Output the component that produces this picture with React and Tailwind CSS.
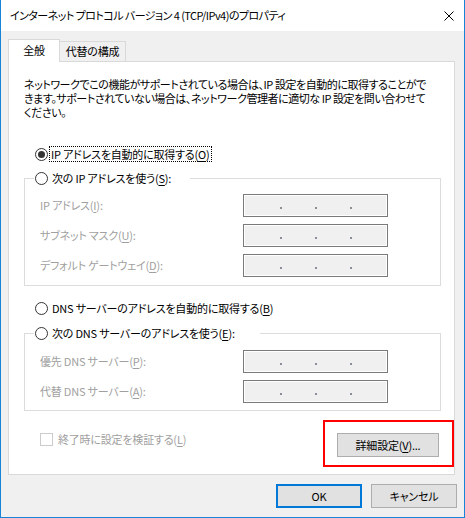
import React from 'react';

const Key = ({ k }) => <span className="underline underline-offset-2">{k}</span>;

function Radio({ checked }) {
  return (
    <span className="w-[13px] h-[13px] shrink-0 rounded-full border border-[#333333] bg-white flex items-center justify-center">
      {checked && <span className="w-[7px] h-[7px] rounded-full bg-[#333333]" />}
    </span>
  );
}

function IpBox() {
  return (
    <div className="w-[145px] h-[23px] border border-[#7a7a7a] bg-[#f0f0f0] shadow-[inset_0_0_0_1px_#ffffff] flex items-start pl-[36px] pt-[12px] gap-[33px]">
      <span className="w-[2px] h-[2px] bg-[#8a8e96]" />
      <span className="w-[2px] h-[2px] bg-[#8a8e96]" />
      <span className="w-[2px] h-[2px] bg-[#8a8e96]" />
    </div>
  );
}

function FieldRow({ label, k, rest }) {
  return (
    <div className="flex items-center h-[23px] ml-[6px]">
      <span className="w-[203px] text-[#a0a0a0]">
        {label}(<Key k={k} />){rest}
      </span>
      <IpBox />
    </div>
  );
}

function Group({ legendWidth, legend, children, top, bottom }) {
  return (
    <fieldset className={`w-[417px] border border-[#dcdcdc] pl-[9px] ${bottom}`}>
      <legend className={`${legendWidth} h-[18px] pl-[1px] flex items-center gap-[4px]`}>
        <Radio />
        <span>{legend}</span>
      </legend>
      <div className={`flex flex-col gap-[7px] ${top}`}>{children}</div>
    </fieldset>
  );
}

export default function App() {
  return (
    <div className="w-[465px] h-[518px] bg-[#f0f0f0] border-l border-r border-b border-[#1883d7] flex flex-col text-[11px] tracking-[-0.2px] leading-none text-black font-['Noto_Sans_CJK_JP',sans-serif] [font-feature-settings:'palt']">
      {/* Title bar */}
      <div className="h-[31px] shrink-0 bg-white flex items-center pl-[9px] pr-[9px] justify-between">
        <span className="tracking-[-0.55px]">インターネット プロトコル バージョン 4 (TCP/IPv4)のプロパティ</span>
        <svg width="10" height="10" viewBox="0 0 10 10" className="mr-[1px]">
          <path d="M0.5 0.5 L9.5 9.5 M9.5 0.5 L0.5 9.5" stroke="#000" strokeWidth="1" />
        </svg>
      </div>

      {/* Body */}
      <div className="pt-[8px] pl-[7px] flex flex-col">
        {/* Tabs */}
        <div className="flex items-start h-[22px]">
          <div className="relative z-10 w-[52px] h-[23px] bg-white border-t border-l border-r border-[#d9d9d9] flex items-center justify-center pb-[1px]">
            全般
          </div>
          <div className="-ml-px mt-[2px] w-[67px] h-[20px] bg-[#f0f0f0] border-t border-l border-r border-[#d9d9d9] flex items-center justify-center">
            代替の構成
          </div>
        </div>

        {/* Panel */}
        <div className="w-[447px] h-[414px] bg-white border border-[#d9d9d9] pl-[15px] flex flex-col">
          <p className="mt-[15px] leading-[14px] whitespace-nowrap tracking-[-0.45px]">
            ネットワークでこの機能がサポートされている場合は、IP 設定を自動的に取得することがで
            <br />
            きます。サポートされていない場合は、ネットワーク管理者に適切な IP 設定を問い合わせて
            <br />
            ください。
          </p>

          <div className="mt-[26px] ml-[11px] h-[18px] flex items-center">
            <Radio checked />
            <span className="ml-[1px] px-[1px] h-[16px] flex items-center border border-dotted border-black">
              IP アドレスを自動的に取得する(<Key k="O" />)
            </span>
          </div>

          <div className="mt-[6px]">
            <Group legendWidth="w-[156px]" legend={<>次の IP アドレスを使う(<Key k="S" />):</>} top="mt-[7px]" bottom="pb-[8px]">
              <FieldRow label="IP アドレス" k="I" rest=":" />
              <FieldRow label="サブネット マスク" k="U" rest=":" />
              <FieldRow label="デフォルト ゲートウェイ" k="D" rest=":" />
            </Group>
          </div>

          <div className="mt-[13px] ml-[11px] h-[18px] flex items-center gap-[4px]">
            <Radio />
            <span>
              DNS サーバーのアドレスを自動的に取得する(<Key k="B" />)
            </span>
          </div>

          <div className="mt-[7px]">
            <Group legendWidth="w-[226px]" legend={<>次の DNS サーバーのアドレスを使う(<Key k="E" />):</>} top="mt-[8px]" bottom="pb-[7px]">
              <FieldRow label="優先 DNS サーバー" k="P" rest=":" />
              <FieldRow label="代替 DNS サーバー" k="A" rest=":" />
            </Group>
          </div>

          <div className="mt-[9px] flex items-start justify-between">
            <div className="ml-[16px] mt-[13px] flex items-center gap-[5px] text-[#a0a0a0]">
              <span className="w-[13px] h-[13px] border border-[#cccccc] bg-white" />
              <span>
                終了時に設定を検証する(<Key k="L" />)
              </span>
            </div>
            <div className="w-[131px] h-[47px] border-2 border-[#ff0000] pl-[12px] pt-[11px]">
              <button className="w-[102px] h-[24px] bg-[#e1e1e1] border border-[#adadad] flex items-center justify-center">
                詳細設定(<Key k="V" />)...
              </button>
            </div>
          </div>
        </div>

        {/* Dialog buttons */}
        <div className="mt-[9px] pr-[7px] flex justify-end gap-[9px]">
          <button className="w-[86px] h-[24px] bg-[#e1e1e1] border-2 border-[#0078d7] flex items-center justify-center">
            OK
          </button>
          <button className="w-[86px] h-[24px] bg-[#e1e1e1] border border-[#adadad] flex items-center justify-center">
            キャンセル
          </button>
        </div>
      </div>
    </div>
  );
}
